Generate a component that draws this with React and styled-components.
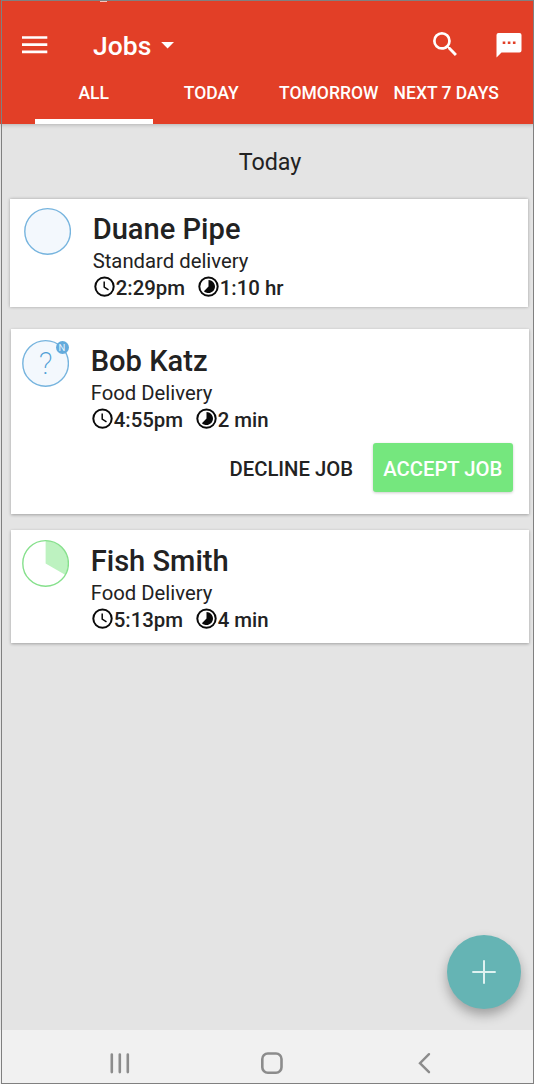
import React from 'react';
import styled, { createGlobalStyle } from 'styled-components';

const tabs = ['ALL', 'TODAY', 'TOMORROW', 'NEXT 7 DAYS'];

const jobs = [
  { name: 'Duane Pipe', type: 'Standard delivery', time: '2:29pm', length: '1:10 hr', status: 'idle' },
  { name: 'Bob Katz', type: 'Food Delivery', time: '4:55pm', length: '2 min', status: 'new' },
  { name: 'Fish Smith', type: 'Food Delivery', time: '5:13pm', length: '4 min', status: 'progress' },
];

function ClockIcon(){
  return(
    <svg width='23' height='22' viewBox='0 0 23 22' fill='none' stroke='#0a0a0a'>
      <circle cx='11.5' cy='10.6' r='9.2' strokeWidth='2' />
      <path d='M11.2 5.6v5.6l4.3 2.7' strokeWidth='1.5' />
    </svg>
  );
}

function DurationIcon(){
  return(
    <svg width='23' height='22' viewBox='0 0 23 22' fill='none'>
      <circle cx='11.5' cy='10.6' r='9.2' stroke='#0a0a0a' strokeWidth='2' />
      <path d='M11.5 4.1a6.5 6.5 0 1 1-4.6 11.1l4.6-4.6z' fill='#0a0a0a' />
    </svg>
  );
}

function StatusIcon({ status }){
  const green = status === 'progress';
  return(
    <svg width='48' height='48' viewBox='0 0 48 48'>
      <circle cx='24.6' cy='24.4' r='22.8' fill={green ? '#fff' : '#f3f8fd'} />
      {green && <path d='M24.6 24.4V1.6a22.8 22.8 0 0 1 19.5 34.2z' fill='#bdf2c0' />}
      <circle cx='24.6' cy='24.4' r='22.8' fill='none' stroke={green ? '#86e08c' : '#76b4de'} strokeWidth='1.4' />
    </svg>
  );
}

function Job({ job }){
  const isNew = job.status === 'new';

  return(
    <Card $status={job.status}>
      <Summary>
        <Status>
          <StatusIcon status={job.status} />
          {isNew && <Question>?</Question>}
          {isNew && <Badge>N</Badge>}
        </Status>
        <div>
          <Name>{job.name}</Name>
          <Type>{job.type}</Type>
          <Times>
            <ClockIcon /><Time $width='81px'>{job.time}</Time>
            <DurationIcon /><Time>{job.length}</Time>
          </Times>
        </div>
      </Summary>
      {isNew &&
        <Actions>
          <Button>DECLINE JOB</Button>
          <Button $primary>ACCEPT JOB</Button>
        </Actions>}
    </Card>
  );
}

function App(){
  return(
    <Screen>
      <GlobalStyle />
      <Header>
        <TopBar>
          <IconButton aria-label='Menu'>
            <svg width='26' height='20' viewBox='0 0 26 20'>
              <path d='M0 2.5h25.3M0 9.6h25.3M0 16.8h25.3' stroke='#fff' strokeWidth='2.7' />
            </svg>
          </IconButton>
          <Title>Jobs</Title>
          <svg width='14' height='8' viewBox='0 0 14 8'><path d='M.2.9h12.8L6.6 7.4z' fill='#fff' /></svg>
          <Tools>
            <IconButton aria-label='Search'>
              <svg width='24' height='26' viewBox='3 3 17.5 19' fill='#fff'>
                <path d='M15.5 14h-.79l-.28-.27A6.47 6.47 0 0 0 16 9.5 6.5 6.5 0 1 0 9.5 16c1.61 0 3.09-.59 4.23-1.57l.27.28v.79l5 4.99L20.49 19l-4.99-5zm-6 0C7.01 14 5 11.99 5 9.5S7.01 5 9.5 5 14 7.01 14 9.5 11.99 14 9.5 14z' />
              </svg>
            </IconButton>
            <IconButton aria-label='Messages'>
              <svg width='26' height='26' viewBox='0 0 26 26'>
                <path d='M2.5.9h21a2 2 0 0 1 2 2v15.6a2 2 0 0 1-2 2h-18L.5 25.5V2.9a2 2 0 0 1 2-2z' fill='#fff' />
                <path d='M6.7 9.5h2.6V12H6.7zM11.8 9.5h2.6V12h-2.6zM16.9 9.5h2.6V12h-2.6z' fill='#e23f27' />
              </svg>
            </IconButton>
          </Tools>
        </TopBar>
        <Tabs>
          {tabs.map((tab, i) => <Tab key={tab} $active={i === 0}>{tab}</Tab>)}
        </Tabs>
      </Header>
      <Content>
        <Day>Today</Day>
        {jobs.map(job => <Job key={job.name} job={job} />)}
      </Content>
      <AddButton aria-label='Add job'>
        <svg width='24' height='24' viewBox='0 0 24 24'>
          <path d='M12 .3v23.4M.3 12h23.4' stroke='#dff2f1' strokeWidth='2' />
        </svg>
      </AddButton>
      <NavBar>
        <svg width='20' height='22' viewBox='0 0 20 22'>
          <path d='M1.8 2.5v17.6M9.8 2.5v17.6M17.8 2.5v17.6' stroke='#8c8c8c' strokeWidth='2.6' strokeLinecap='round' />
        </svg>
        <svg width='22' height='22' viewBox='0 0 22 22'>
          <rect x='1.3' y='1.5' width='19.2' height='19.2' rx='5.5' fill='none' stroke='#8c8c8c' strokeWidth='2.6' />
        </svg>
        <svg width='13' height='22' viewBox='0 0 13 22'>
          <path d='M11 2.2L2 11.2l9 9' fill='none' stroke='#8c8c8c' strokeWidth='2.4' strokeLinecap='round' />
        </svg>
      </NavBar>
    </Screen>
  );
}

const GlobalStyle = createGlobalStyle`
  * {
    box-sizing: border-box;
  }
  body {
    margin: 0;
    font-family: Roboto, sans-serif;
    color: #222;
  }
  svg {
    display: block;
    flex-shrink: 0;
  }
  button {
    font-family: inherit;
    border: none;
    padding: 0;
    background: none;
    cursor: pointer;
  }
`
const Screen = styled.div`
  position: relative;
  width: 534px;
  height: 1084px;
  display: flex;
  flex-direction: column;
  background-color: #e4e4e4;
  overflow: hidden;
  &::after {
    content: '';
    position: absolute;
    inset: 0 0 0 1px;
    border: 1px solid #808080;
    pointer-events: none;
  }
`
const Header = styled.header`
  position: relative;
  height: 124px;
  background-color: #e23f27;
  color: #fff;
  box-shadow: 0 1px 4px rgba(0, 0, 0, 0.22);
  /* bottom edge of the status bar clock */
  &::before {
    content: '';
    position: absolute;
    top: 1px;
    left: 100px;
    width: 7px;
    height: 1px;
    background-color: rgba(255, 255, 255, 0.7);
  }
`
const TopBar = styled.div`
  height: 76px;
  padding: 13px 12px 0 22px;
  display: flex;
  align-items: center;
`
const IconButton = styled.button`
  display: flex;
`
const Title = styled.h1`
  margin: 3px 10px 0 45px;
  font-size: 26.5px;
  font-weight: 500;
  line-height: 32px;
`
const Tools = styled.div`
  margin-left: auto;
  display: flex;
  align-items: center;
  gap: 39px;
`
const Tabs = styled.nav`
  display: flex;
  padding-left: 35px;
`
const Tab = styled.div`
  width: 117.5px;
  height: 48px;
  padding-top: 7px;
  border-bottom: 5px solid ${props => props.$active ? '#fff' : 'transparent'};
  font-size: 17.5px;
  font-weight: 500;
  line-height: 20px;
  text-align: center;
  white-space: nowrap;
`
const Content = styled.main`
  flex: 1;
`
const Day = styled.h2`
  margin: 0;
  height: 75px;
  padding: 22px 0 0 6px;
  font-size: 23.3px;
  font-weight: 400;
  line-height: 32px;
  text-align: center;
`
const heights = { idle: '108px', new: '185px', progress: '113px' };
const gaps = { idle: '22px', new: '16px', progress: '0' };
const paddings = { idle: '8px 15px 0 13px', new: '10px 16px 0 10px', progress: '9px 16px 0 10px' };

const Card = styled.article`
  width: 518px;
  height: ${props => heights[props.$status]};
  margin: 0 0 ${props => gaps[props.$status]} ${props => props.$status === 'idle' ? '10px' : '11px'};
  padding: ${props => paddings[props.$status]};
  background-color: #fff;
  box-shadow: 0 ${props => props.$status === 'idle' ? '0' : '1px'} 3px rgba(0, 0, 0, 0.3);
`
const Summary = styled.div`
  display: flex;
  gap: 21.7px;
`
const Status = styled.div`
  position: relative;
  width: 48px;
  height: 48px;
`
const Question = styled.span`
  position: absolute;
  inset: 0 0 0 1px;
  font-size: 31px;
  font-weight: 200;
  line-height: 49px;
  text-align: center;
  color: #4f9fd6;
`
const Badge = styled.span`
  position: absolute;
  top: 1.5px;
  right: 0.5px;
  width: 13px;
  height: 13px;
  border-radius: 50%;
  background-color: #64abdc;
  color: #e8f4fc;
  font-size: 9.5px;
  line-height: 13px;
  text-align: center;
`
const Name = styled.h3`
  margin: 4px 0 0;
  font-size: 29.1px;
  font-weight: 500;
  line-height: 36px;
`
const Type = styled.p`
  margin: 2px 0 0;
  font-size: 20.3px;
  line-height: 24px;
`
const Times = styled.div`
  display: flex;
  align-items: center;
  height: 26px;
  margin-top: 1px;
`
const Time = styled.span`
  width: ${props => props.$width || 'auto'};
  padding-top: 1px;
  font-size: 20.4px;
  font-weight: 500;
`
const Actions = styled.div`
  display: flex;
  justify-content: flex-end;
  gap: 11px;
  margin-top: 11px;
`
const Button = styled.button`
  height: 49px;
  width: 140.5px;
  padding-top: 2px;
  border-radius: 3px;
  font-size: 20.3px;
  font-weight: 500;
  white-space: nowrap;
  color: ${props => props.$primary ? '#fff' : '#222'};
  background-color: ${props => props.$primary ? '#75e77e' : 'transparent'};
  box-shadow: ${props => props.$primary ? '0 1px 3px rgba(0, 0, 0, 0.2)' : 'none'};
`
const AddButton = styled.button`
  position: absolute;
  left: 446.5px;
  top: 935.3px;
  width: 74px;
  height: 74px;
  display: flex;
  align-items: center;
  justify-content: center;
  border-radius: 50%;
  background-color: #65b4b4;
  box-shadow: 0 6px 12px rgba(0, 0, 0, 0.3);
`
const NavBar = styled.footer`
  height: 54px;
  padding: 12px 103px 0 110px;
  display: flex;
  gap: 131px;
  align-items: center;
  background-color: #f1f1f1;
  svg:last-child {
    margin-left: 4px;
  }
`

export default App;
